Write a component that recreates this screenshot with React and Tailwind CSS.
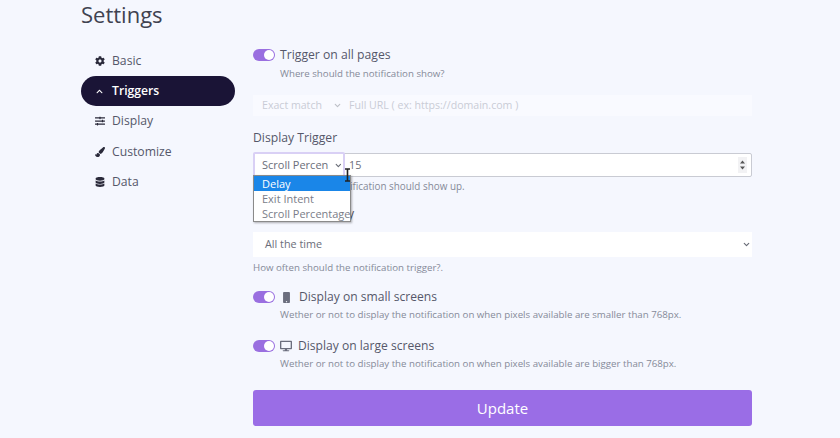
import React from "react";
import { FaCog, FaChevronUp, FaSlidersH, FaPaintBrush, FaDatabase, FaMobile, FaDesktop } from "react-icons/fa";
import { ChevronDown } from "lucide-react";

const Nav = ({ icon: I, label, active }) => (
  <div className={`h-[30.2px] rounded-full flex items-center pl-[13px] text-[12.2px] ${active ? "bg-[#1a1436] text-white font-semibold" : "text-[#55576a]"}`}>
    <span className="w-[11px] flex justify-center mr-[7px]">
      <I className={active ? "text-white text-[7px]" : "text-[#2a2a3a] text-[10px]"} />
    </span>
    {label}
  </div>
);

const Toggle = () => (
  <div className="w-[22px] h-[12px] rounded-full bg-[#9a6fe0] flex items-center justify-end pr-[1px] shrink-0">
    <div className="w-[10px] h-[10px] rounded-full bg-white" />
  </div>
);

const Help = ({ children, className = "" }) => (
  <div className={`text-[9.7px] leading-[14px] text-[#858a99] ${className}`}>{children}</div>
);

const Chev = ({ className = "" }) => <ChevronDown size={9} strokeWidth={3} className={`text-[#666a75] ${className}`} />;

export default function App() {
  return (
    <div className="w-[840px] h-[438px] overflow-hidden bg-[#f5f7fe] flex pl-[81px] text-[#55576a]" style={{ fontFamily: '"Open Sans", sans-serif' }}>
      <div className="w-[154px] shrink-0">
        <div className="text-[22px] leading-[28px] text-[#404250] font-normal">Settings</div>
        <div className="mt-[18px] flex flex-col">
          <Nav icon={FaCog} label="Basic" />
          <Nav icon={FaChevronUp} label="Triggers" active />
          <Nav icon={FaSlidersH} label="Display" />
          <Nav icon={FaPaintBrush} label="Customize" />
          <Nav icon={FaDatabase} label="Data" />
        </div>
      </div>
      <div className="ml-[18px] w-[499px] pt-[46px]">
        <div className="flex items-center h-[18px]">
          <Toggle />
          <span className="ml-[5px] text-[12.2px]">Trigger on all pages</span>
        </div>
        <Help className="ml-[27px] mt-[3px]">Where should the notification show?</Help>

        <div className="mt-[14px] h-[21px] bg-[#f9faff] flex items-center text-[10.6px] text-[#c9ccd6]">
          <span className="ml-[9px] w-[71px]">Exact match</span>
          <Chev className="opacity-40" />
          <span className="ml-[7px]">Full URL ( ex: https://domain.com )</span>
        </div>

        <div className="mt-[13px] text-[12.2px] leading-[18px]">Display Trigger</div>

        <div className="relative mt-[6px]">
          <div className="h-[24px] bg-white border border-[#c9cbd3] rounded-[2px] flex items-center">
            <div className="absolute left-0 top-[-1px] w-[92px] h-[25px] bg-white border-2 border-[#d9d0f5] rounded-[2px] flex items-center text-[11px] text-[#6b6e7a] pl-[7px] pt-[1px]">
              <span className="w-[75px]">Scroll Percen</span>
              <Chev />
            </div>
            <span className="ml-[95px] text-[10.8px] text-[#6b6e7a]">15</span>
            <div className="ml-auto mr-[4px] w-[9px] h-[16px] bg-[#f2f2f4] flex flex-col items-center justify-center text-[#555] leading-none">
              <svg width="7" height="12" viewBox="0 0 7 12"><path d="M3.5 1.5 6 4.5H1z M3.5 10.5 6 7.5H1z" fill="#555" /></svg>
            </div>
          </div>
          <div className="absolute left-0 top-[22px] w-[98px] bg-white border border-[#8a8a8a] shadow-[1px_1px_2px_rgba(0,0,0,0.3)] text-[11px] leading-[15px] text-[#7a7d88] z-10">
            <div className="bg-[#1a86e8] text-white pl-[8px]">Delay</div>
            <div className="pl-[8px]">Exit Intent</div>
            <div className="pl-[8px] whitespace-nowrap">Scroll Percentage</div>
          </div>
          <svg className="absolute left-[91px] top-[15px] z-20" width="7" height="14" viewBox="0 0 7 14"><path d="M1 1h5M3.5 1v12M1 13h5" stroke="#222" strokeWidth="1.6" fill="none" /></svg>
          <Help className="ml-[98px] mt-[2px]">
            <span className="-ml-[1px] text-[9.9px]">ification should show up.</span>
          </Help>
        </div>

        <div className="mt-[11px] h-[18px] text-[12.2px] leading-[18px] pl-[95px]">y</div>

        <div className="mt-[9px] h-[25px] bg-white flex items-center text-[10.8px] text-[#6b6e7a] pl-[12px] pr-[1px] justify-between">
          <span>All the time</span>
          <Chev />
        </div>
        <Help className="mt-[4px]">How often should the notification trigger?.</Help>

        <div className="mt-[13px] flex items-center h-[18px]">
          <Toggle />
          <FaMobile className="ml-[6px] text-[#6b6e7e] text-[11px]" />
          <span className="ml-[7px] text-[12.1px]">Display on small screens</span>
        </div>
        <Help className="ml-[27px] mt-[2px]">Wether or not to display the notification on when pixels available are smaller than 768px.</Help>

        <div className="mt-[15px] flex items-center h-[18px]">
          <Toggle />
          <FaDesktop className="ml-[5px] text-[#6b6e7e] text-[12px]" />
          <span className="ml-[6px] text-[12.1px]">Display on large screens</span>
        </div>
        <Help className="ml-[27px] mt-[2px]">Wether or not to display the notification on when pixels available are bigger than 768px.</Help>

        <div className="mt-[19px] h-[36px] rounded-[3px] bg-[#9a6de6] text-white text-[15px] flex items-center justify-center">Update</div>
      </div>
    </div>
  );
}
